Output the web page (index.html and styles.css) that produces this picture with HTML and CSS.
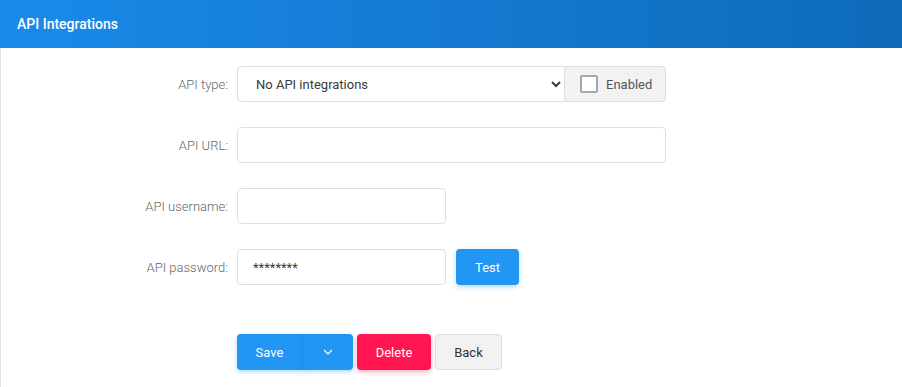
FILE: index.html
```html
<!DOCTYPE html>
<html lang="en">
<head>
    <meta charset="UTF-8">
    <title>API Integrations</title>
    <link rel="stylesheet" href="styles.css">
</head>
<body>
    <header class="panel-header">API Integrations</header>

    <main class="panel-body">
        <form class="api-form">
            <label class="field-label" for="api-type">API type:</label>
            <div class="field-control">
                <select id="api-type" class="input select">
                    <option>No API integrations</option>
                </select>
                <label class="addon">
                    <span class="checkbox"></span>
                    Enabled
                </label>
            </div>

            <label class="field-label" for="api-url">API URL:</label>
            <div class="field-control">
                <input id="api-url" class="input input-wide" type="text">
            </div>

            <label class="field-label" for="api-user">API username:</label>
            <div class="field-control">
                <input id="api-user" class="input input-short" type="text">
            </div>

            <label class="field-label" for="api-pass">API password:</label>
            <div class="field-control">
                <input id="api-pass" class="input input-short" type="text" value="********">
                <button type="button" class="btn btn-blue btn-test">Test</button>
            </div>
        </form>

        <div class="actions">
            <div class="split-btn">
                <button type="button" class="btn btn-blue btn-save">Save</button>
                <button type="button" class="btn btn-blue btn-caret">
                    <svg width="10" height="6" viewBox="0 0 10 6"><path d="M1 1l4 4 4-4" fill="none" stroke="#fff" stroke-width="1.2"/></svg>
                </button>
            </div>
            <button type="button" class="btn btn-red">Delete</button>
            <button type="button" class="btn btn-grey">Back</button>
        </div>
    </main>
</body>
</html>
```

FILE: styles.css
```css
body {
    margin: 0;
    font-family: Roboto, "Liberation Sans", sans-serif;
    background: #fff;
}

.panel-header {
    height: 48px;
    line-height: 48px;
    padding-left: 17px;
    color: white;
    font-size: 14px;
    font-weight: 500;
    background: linear-gradient(90deg, #1a8aea, #0e6ab9);
}

.panel-body {
    border-left: 1px solid #e2e2e2;
    padding-top: 18px;
    height: 321px;
}

/* Form grid */
.api-form {
    display: grid;
    grid-template-columns: 227px 1fr;
    column-gap: 9px;
    row-gap: 25px;
    align-items: center;
}

.field-label {
    text-align: right;
    font-size: 13px;
    font-weight: 300;
    color: #666;
}

.field-control {
    display: flex;
    align-items: center;
    height: 36px;
}

.input {
    box-sizing: border-box;
    height: 36px;
    border: 1px solid #e0e0e0;
    border-radius: 4px;
    background: white;
    font-family: inherit;
    font-size: 13px;
    color: #3a3a3a;
    padding: 0 15px;
    outline: none;
}

.select {
    width: 328px;
    padding-left: 14px;
    border-radius: 4px 0 0 4px;
}

.addon {
    box-sizing: border-box;
    width: 101px;
    height: 36px;
    display: flex;
    align-items: center;
    gap: 8px;
    padding-left: 15px;
    background: #f2f2f2;
    border: 1px solid #e0e0e0;
    border-left: none;
    border-radius: 0 4px 4px 0;
    font-size: 13px;
    color: #555;
}

.checkbox {
    box-sizing: border-box;
    width: 18px;
    height: 18px;
    border: 2px solid #a4a8ad;
    border-radius: 2px;
    background: white;
}

.input-wide {
    width: 429px;
}

.input-short {
    width: 209px;
}

/* Buttons */
.btn {
    box-sizing: border-box;
    height: 36px;
    border: none;
    border-radius: 4px;
    font-family: inherit;
    font-size: 13px;
    cursor: pointer;
    padding: 0;
}

.btn-blue {
    background: #2196f3;
    color: white;
    box-shadow: 0 2px 5px rgba(33, 150, 243, 0.35);
}

.btn-red {
    width: 74px;
    background: #ff1650;
    color: white;
    box-shadow: 0 2px 5px rgba(255, 22, 80, 0.35);
}

.btn-grey {
    width: 67px;
    background: #f2f2f2;
    color: #333;
    border: 1px solid #dcdcdc;
}

.btn-test {
    width: 63px;
    margin-left: 10px;
}

.actions {
    display: flex;
    gap: 4px;
    margin-top: 49px;
    padding-left: 236px;
}

.split-btn {
    display: flex;
}

.btn-save {
    width: 66px;
    border-radius: 4px 0 0 4px;
    border-right: 1px solid #1c87dc;
}

.btn-caret {
    width: 50px;
    border-radius: 0 4px 4px 0;
    display: flex;
    align-items: center;
    justify-content: center;
}
```
